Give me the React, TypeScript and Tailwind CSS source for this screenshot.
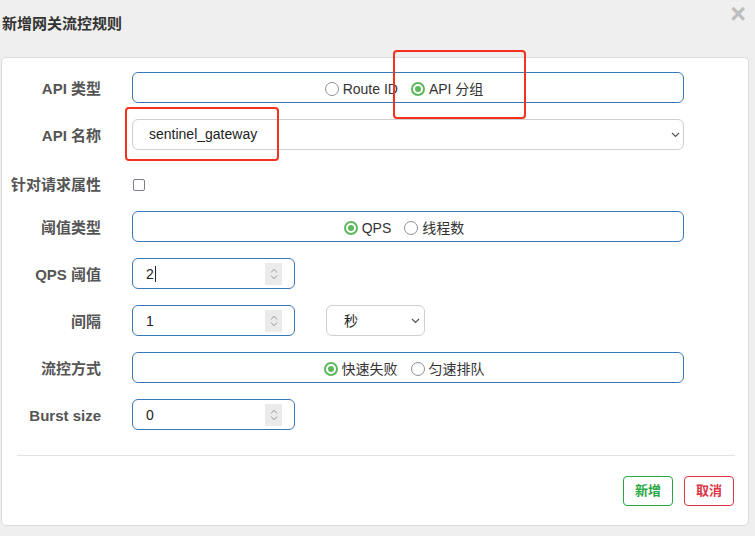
import React from "react";

const FONT = "font-['Liberation_Sans','Noto_Sans_CJK_SC',sans-serif]";

interface RadioOpt {
  label: string;
  checked?: boolean;
}

const Radio: React.FC<RadioOpt> = ({ label, checked }) => (
  <span className="flex items-center gap-[4px]">
    {checked ? (
      <span className="w-[14px] h-[14px] rounded-full border-[2px] border-[#5cb85c] flex items-center justify-center">
        <span className="w-[6px] h-[6px] rounded-full bg-[#5cb85c]" />
      </span>
    ) : (
      <span className="w-[14px] h-[14px] rounded-full border-[1.5px] border-[#8e8e9a]" />
    )}
    <span className="text-[14px] text-[#333]">{label}</span>
  </span>
);

const RadioBox: React.FC<{ options: RadioOpt[] }> = ({ options }) => (
  <div className="w-[552px] h-[31px] border border-[#3a78b8] rounded-[6px] flex items-center justify-center gap-[13px] pt-[3px] pr-[8px]">
    {options.map((o) => (
      <Radio key={o.label} {...o} />
    ))}
  </div>
);

const Chevron: React.FC = () => (
  <svg width="9" height="6" viewBox="0 0 9 6" fill="none">
    <path d="M1 1l3.5 3.5L8 1" stroke="#555" strokeWidth="1.2" />
  </svg>
);

const NumberInput: React.FC<{ value: string; caret?: boolean }> = ({ value, caret }) => (
  <div className="w-[163px] h-[31px] border border-[#3a78b8] rounded-[6px] flex items-center pl-[13px] pr-[12px]">
    <span className="flex-1 text-[14px] text-[#222] flex items-center pt-[1px]">
      {value}
      {caret && <span className="w-px h-[16px] bg-[#222] ml-[1px]" />}
    </span>
    <span className="w-[17px] h-[22px] bg-[#ebebeb] flex flex-col items-center justify-center gap-[2px]">
      <svg width="8" height="5" viewBox="0 0 8 5" fill="none">
        <path d="M1 4.5L4 1.2l3 3.3" stroke="#999" strokeWidth="1" />
      </svg>
      <svg width="8" height="5" viewBox="0 0 8 5" fill="none">
        <path d="M1 0.5L4 3.8l3-3.3" stroke="#999" strokeWidth="1" />
      </svg>
    </span>
  </div>
);

const Label: React.FC<{ text: string }> = ({ text }) => (
  <div className="w-[99px] text-right text-[15px] font-bold text-[#555] shrink-0 pt-[3px]">{text}</div>
);

export default function App() {
  return (
    <div className={`relative w-[755px] h-[536px] bg-[#efefef] overflow-hidden ${FONT}`}>
      {/* Header */}
      <div className="h-[57px] flex items-start justify-between">
        <h4 className="mt-[13px] ml-[2px] text-[15px] font-bold text-[#333]">新增网关流控规则</h4>
        <span className="mt-[1px] mr-[9px] text-[27px] leading-[26px] font-bold text-[#bdbdbd]">×</span>
      </div>

      {/* Card */}
      <div className="ml-[1px] w-[748px] h-[469px] bg-white border border-[#dcdcdc] rounded-[5px] pt-[14px]">
        <div className="flex flex-col">
          <div className="flex items-center h-[31px] gap-[31px]">
            <Label text="API 类型" />
            <RadioBox options={[{ label: "Route ID" }, { label: "API 分组", checked: true }]} />
          </div>

          <div className="flex items-center h-[31px] gap-[31px] mt-[16px]">
            <Label text="API 名称" />
            <div className="w-[552px] h-[31px] border border-[#cfcfcf] rounded-[6px] flex items-center justify-between pl-[16px] pr-[3px]">
              <span className="text-[14px] text-[#222]">sentinel_gateway</span>
              <Chevron />
            </div>
          </div>

          <div className="flex items-center h-[31px] gap-[31px] mt-[18px]">
            <Label text="针对请求属性" />
            <span className="w-[12px] h-[12px] border-[1.5px] border-[#7d7d8a] rounded-[2px] ml-[1px] mt-[2px]" />
          </div>

          <div className="flex items-center h-[31px] gap-[31px] mt-[12px]">
            <Label text="阈值类型" />
            <RadioBox options={[{ label: "QPS", checked: true }, { label: "线程数" }]} />
          </div>

          <div className="flex items-center h-[31px] gap-[31px] mt-[16px]">
            <Label text="QPS 阈值" />
            <NumberInput value="2" caret />
          </div>

          <div className="flex items-center h-[31px] gap-[31px] mt-[16px]">
            <Label text="间隔" />
            <div className="flex items-center gap-[31px]">
              <NumberInput value="1" />
              <div className="w-[99px] h-[31px] border border-[#cfcfcf] rounded-[6px] flex items-center justify-between pl-[17px] pr-[4px]">
                <span className="text-[14px] text-[#222] pt-[2px]">秒</span>
                <Chevron />
              </div>
            </div>
          </div>

          <div className="flex items-center h-[31px] gap-[31px] mt-[16px]">
            <Label text="流控方式" />
            <RadioBox options={[{ label: "快速失败", checked: true }, { label: "匀速排队" }]} />
          </div>

          <div className="flex items-center h-[31px] gap-[31px] mt-[16px]">
            <Label text="Burst size" />
            <NumberInput value="0" />
          </div>
        </div>

        <div className="mt-[25px] ml-[15px] w-[718px] border-t border-[#e3e3e3]" />

        <div className="flex justify-end gap-[11px] mt-[20px] mr-[14px]">
          <button className="w-[50px] h-[30px] border border-[#28a745] rounded-[4px] text-[13px] font-semibold text-[#28a745]">
            新增
          </button>
          <button className="w-[50px] h-[30px] border border-[#dc3545] rounded-[4px] text-[13px] font-semibold text-[#dc3545]">
            取消
          </button>
        </div>
      </div>

      {/* Red annotation boxes */}
      <div className="absolute left-[393px] top-[50px] w-[133px] h-[69px] border-[2px] border-[#f5321f] rounded-[4px]" />
      <div className="absolute left-[125px] top-[107px] w-[154px] h-[54px] border-[2px] border-[#f5321f] rounded-[4px]" />
    </div>
  );
}
